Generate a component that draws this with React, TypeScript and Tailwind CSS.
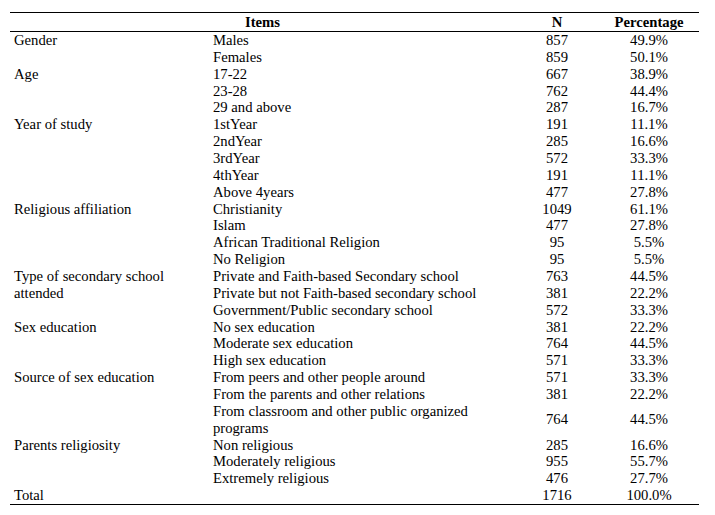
import type { ReactNode } from "react";

type Group = { label: ReactNode; items: { name: ReactNode; n: string; pct: string }[] };

const groups: Group[] = [
  {
    label: "Gender",
    items: [
      { name: "Males", n: "857", pct: "49.9%" },
      { name: "Females", n: "859", pct: "50.1%" },
    ],
  },
  {
    label: "Age",
    items: [
      { name: "17-22", n: "667", pct: "38.9%" },
      { name: "23-28", n: "762", pct: "44.4%" },
      { name: "29 and above", n: "287", pct: "16.7%" },
    ],
  },
  {
    label: "Year of study",
    items: [
      { name: "1stYear", n: "191", pct: "11.1%" },
      { name: "2ndYear", n: "285", pct: "16.6%" },
      { name: "3rdYear", n: "572", pct: "33.3%" },
      { name: "4thYear", n: "191", pct: "11.1%" },
      { name: "Above 4years", n: "477", pct: "27.8%" },
    ],
  },
  {
    label: "Religious affiliation",
    items: [
      { name: "Christianity", n: "1049", pct: "61.1%" },
      { name: "Islam", n: "477", pct: "27.8%" },
      { name: "African Traditional Religion", n: "95", pct: "5.5%" },
      { name: "No Religion", n: "95", pct: "5.5%" },
    ],
  },
  {
    label: "Type of secondary school attended",
    items: [
      { name: "Private and Faith-based Secondary school", n: "763", pct: "44.5%" },
      { name: "Private but not Faith-based secondary school", n: "381", pct: "22.2%" },
      { name: "Government/Public secondary school", n: "572", pct: "33.3%" },
    ],
  },
  {
    label: "Sex education",
    items: [
      { name: "No sex education", n: "381", pct: "22.2%" },
      { name: "Moderate sex education", n: "764", pct: "44.5%" },
      { name: "High sex education", n: "571", pct: "33.3%" },
    ],
  },
  {
    label: "Source of sex education",
    items: [
      { name: "From peers and other people around", n: "571", pct: "33.3%" },
      { name: "From the parents and other relations", n: "381", pct: "22.2%" },
      {
        name: (
          <>
            From classroom and other public organized
            <br />
            programs
          </>
        ),
        n: "764",
        pct: "44.5%",
      },
    ],
  },
  {
    label: "Parents religiosity",
    items: [
      { name: "Non religious", n: "285", pct: "16.6%" },
      { name: "Moderately religious", n: "955", pct: "55.7%" },
      { name: "Extremely religious", n: "476", pct: "27.7%" },
    ],
  },
];

export default function App() {
  return (
    <div className="h-[515px] w-[715px] bg-white pt-[12px] pl-[10px] font-['Liberation_Serif',serif] text-[14.67px] leading-[16.86px] text-black">
      <table className="w-[689px] table-fixed border-collapse">
        <colgroup>
          <col className="w-[199px]" />
          <col className="w-[306px]" />
          <col className="w-[84px]" />
          <col className="w-[100px]" />
        </colgroup>
        <thead>
          <tr className="h-[19px] border-y border-black">
            <th colSpan={2} className="p-0 text-center font-bold">Items</th>
            <th className="p-0 text-center font-bold">N</th>
            <th className="p-0 text-center font-bold">Percentage</th>
          </tr>
        </thead>
        <tbody>
          {groups.map((g) =>
            g.items.map((it, i) => (
              <tr key={`${String(g.label)}-${i}`}>
                {i === 0 && (
                  <td rowSpan={g.items.length} className="p-0 pl-[4px] pr-[12px] align-top">
                    {g.label}
                  </td>
                )}
                <td className="p-0 pl-[4px] align-top">{it.name}</td>
                <td className="p-0 text-center align-middle">{it.n}</td>
                <td className="p-0 text-center align-middle">{it.pct}</td>
              </tr>
            ))
          )}
          <tr className="border-b border-black">
            <td className="p-0 pl-[4px]">Total</td>
            <td className="p-0" />
            <td className="p-0 text-center">1716</td>
            <td className="p-0 text-center">100.0%</td>
          </tr>
        </tbody>
      </table>
    </div>
  );
}
